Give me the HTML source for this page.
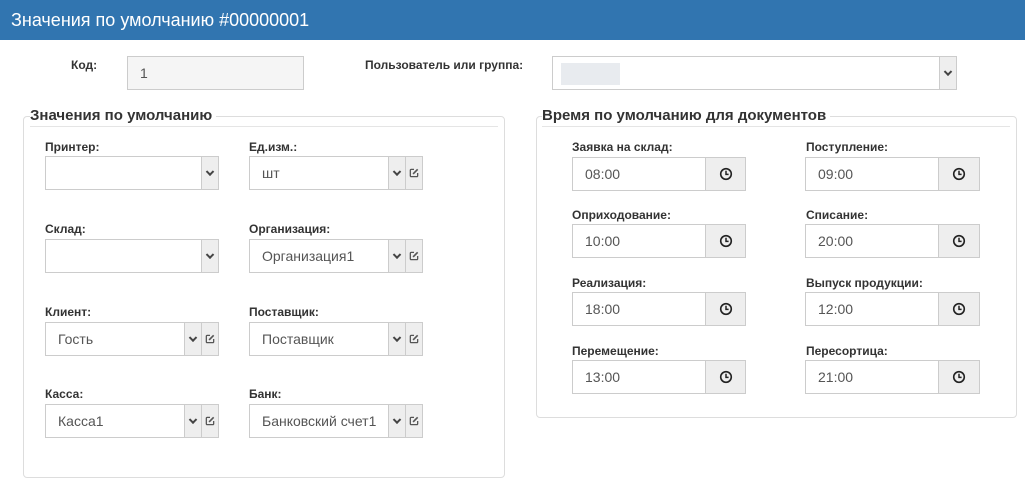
<!DOCTYPE html>
<html><head><meta charset="utf-8"><style>
*{box-sizing:border-box;margin:0;padding:0}
body{width:1025px;height:487px;background:#fff;font-family:"Liberation Sans",Arial,sans-serif;color:#333;position:relative;overflow:hidden}
.hdr{position:absolute;left:0;top:0;width:1025px;height:40px;background:#3175b0;color:#fff;font-size:18px;line-height:40px;padding-left:11px}
.a{position:absolute}
.lbl{position:absolute;font-size:12px;font-weight:bold;color:#333}
.inp{position:absolute;height:34px;border:1px solid #ccc;background:#fff;font-size:14px;color:#555;line-height:32px;padding-left:12px}
.btn{position:absolute;height:34px;border:1px solid #ccc;background:#eee}
.btn svg{position:absolute;left:50%;top:50%;transform:translate(-50%,-50%)}
.fs{position:absolute;border:1px solid #ddd;border-radius:4px}
.leg{position:absolute;font-size:15px;font-weight:bold;color:#333;background:#fff;line-height:18px}
.line{position:absolute;height:1px;background:#e5e5e5}
.chev{position:absolute;left:50%;top:50%;width:6px;height:6px;border-right:2px solid #444;border-bottom:2px solid #444;transform:translate(-50%,-70%) rotate(45deg)}
</style></head><body>
<svg width="0" height="0" style="position:absolute">
<defs>
<symbol id="clk" viewBox="0 0 14 14"><circle cx="7" cy="7" r="5.3" fill="none" stroke="#222" stroke-width="1.6"/><path d="M7 3.8V7.4H9.6" fill="none" stroke="#222" stroke-width="1.5"/></symbol>
<symbol id="ed" viewBox="0 0 12 12"><path d="M6 2H3Q2 2 2 3V9Q2 10 3 10H9Q10 10 10 9V6" fill="none" stroke="#555" stroke-width="1.4"/><path d="M5 7L10 2" stroke="#555" stroke-width="1.8"/></symbol>
</defs></svg>
<div class="hdr">Значения по умолчанию #00000001</div>

<div class="lbl" style="left:71px;top:58px">Код:</div>
<div class="inp" style="left:127px;top:56px;width:177px;background:#f5f5f5">1</div>
<div class="lbl" style="left:365px;top:58px">Пользователь или группа:</div>
<div class="inp" style="left:552px;top:56px;width:388px"></div>
<div class="a" style="left:561px;top:63px;width:59px;height:22px;background:#e8ebef"></div>
<div class="btn" style="left:939px;top:56px;width:18px"><div class="chev"></div></div>

<div class="fs" style="left:23px;top:116px;width:482px;height:362px"></div>
<div class="line" style="left:30px;top:126px;width:468px"></div>
<div class="leg" style="left:30px;top:107px;padding-right:4px">Значения по умолчанию</div>

<div class="fs" style="left:536px;top:116px;width:481px;height:302px"></div>
<div class="line" style="left:542px;top:126px;width:468px"></div>
<div class="leg" style="left:542px;top:107px;padding-right:4px">Время по умолчанию для документов</div>

<div class="lbl" style="left:45px;top:140px">Принтер:</div>
<div class="inp" style="left:45px;top:156px;width:157px"></div>
<div class="btn" style="left:201px;top:156px;width:18px"><div class="chev"></div></div>
<div class="lbl" style="left:45px;top:222px">Склад:</div>
<div class="inp" style="left:45px;top:239px;width:157px"></div>
<div class="btn" style="left:201px;top:239px;width:18px"><div class="chev"></div></div>
<div class="lbl" style="left:45px;top:305px">Клиент:</div>
<div class="inp" style="left:45px;top:322px;width:140px">Гость</div>
<div class="btn" style="left:184px;top:322px;width:18px"><div class="chev"></div></div>
<div class="btn" style="left:201px;top:322px;width:18px"><svg width="11" height="11"><use href="#ed"/></svg></div>
<div class="lbl" style="left:45px;top:387px">Касса:</div>
<div class="inp" style="left:45px;top:404px;width:140px">Касса1</div>
<div class="btn" style="left:184px;top:404px;width:18px"><div class="chev"></div></div>
<div class="btn" style="left:201px;top:404px;width:18px"><svg width="11" height="11"><use href="#ed"/></svg></div>

<div class="lbl" style="left:249px;top:140px">Ед.изм.:</div>
<div class="inp" style="left:249px;top:156px;width:140px">шт</div>
<div class="btn" style="left:388px;top:156px;width:18px"><div class="chev"></div></div>
<div class="btn" style="left:405px;top:156px;width:18px"><svg width="11" height="11"><use href="#ed"/></svg></div>
<div class="lbl" style="left:249px;top:222px">Организация:</div>
<div class="inp" style="left:249px;top:239px;width:140px">Организация1</div>
<div class="btn" style="left:388px;top:239px;width:18px"><div class="chev"></div></div>
<div class="btn" style="left:405px;top:239px;width:18px"><svg width="11" height="11"><use href="#ed"/></svg></div>
<div class="lbl" style="left:249px;top:305px">Поставщик:</div>
<div class="inp" style="left:249px;top:322px;width:140px">Поставщик</div>
<div class="btn" style="left:388px;top:322px;width:18px"><div class="chev"></div></div>
<div class="btn" style="left:405px;top:322px;width:18px"><svg width="11" height="11"><use href="#ed"/></svg></div>
<div class="lbl" style="left:249px;top:387px">Банк:</div>
<div class="inp" style="left:249px;top:404px;width:140px">Банковский счет1</div>
<div class="btn" style="left:388px;top:404px;width:18px"><div class="chev"></div></div>
<div class="btn" style="left:405px;top:404px;width:18px"><svg width="11" height="11"><use href="#ed"/></svg></div>

<div class="lbl" style="left:572px;top:140px">Заявка на склад:</div>
<div class="inp" style="left:572px;top:157px;width:134px">08:00</div>
<div class="btn" style="left:705px;top:157px;width:41px"><svg width="14" height="14"><use href="#clk"/></svg></div>
<div class="lbl" style="left:806px;top:140px">Поступление:</div>
<div class="inp" style="left:805px;top:157px;width:134px">09:00</div>
<div class="btn" style="left:938px;top:157px;width:42px"><svg width="14" height="14"><use href="#clk"/></svg></div>

<div class="lbl" style="left:572px;top:208px">Оприходование:</div>
<div class="inp" style="left:572px;top:224px;width:134px">10:00</div>
<div class="btn" style="left:705px;top:224px;width:41px"><svg width="14" height="14"><use href="#clk"/></svg></div>
<div class="lbl" style="left:806px;top:208px">Списание:</div>
<div class="inp" style="left:805px;top:224px;width:134px">20:00</div>
<div class="btn" style="left:938px;top:224px;width:42px"><svg width="14" height="14"><use href="#clk"/></svg></div>

<div class="lbl" style="left:572px;top:276px">Реализация:</div>
<div class="inp" style="left:572px;top:292px;width:134px">18:00</div>
<div class="btn" style="left:705px;top:292px;width:41px"><svg width="14" height="14"><use href="#clk"/></svg></div>
<div class="lbl" style="left:806px;top:276px">Выпуск продукции:</div>
<div class="inp" style="left:805px;top:292px;width:134px">12:00</div>
<div class="btn" style="left:938px;top:292px;width:42px"><svg width="14" height="14"><use href="#clk"/></svg></div>

<div class="lbl" style="left:572px;top:344px">Перемещение:</div>
<div class="inp" style="left:572px;top:360px;width:134px">13:00</div>
<div class="btn" style="left:705px;top:360px;width:41px"><svg width="14" height="14"><use href="#clk"/></svg></div>
<div class="lbl" style="left:806px;top:344px">Пересортица:</div>
<div class="inp" style="left:805px;top:360px;width:134px">21:00</div>
<div class="btn" style="left:938px;top:360px;width:42px"><svg width="14" height="14"><use href="#clk"/></svg></div>
</body></html>
